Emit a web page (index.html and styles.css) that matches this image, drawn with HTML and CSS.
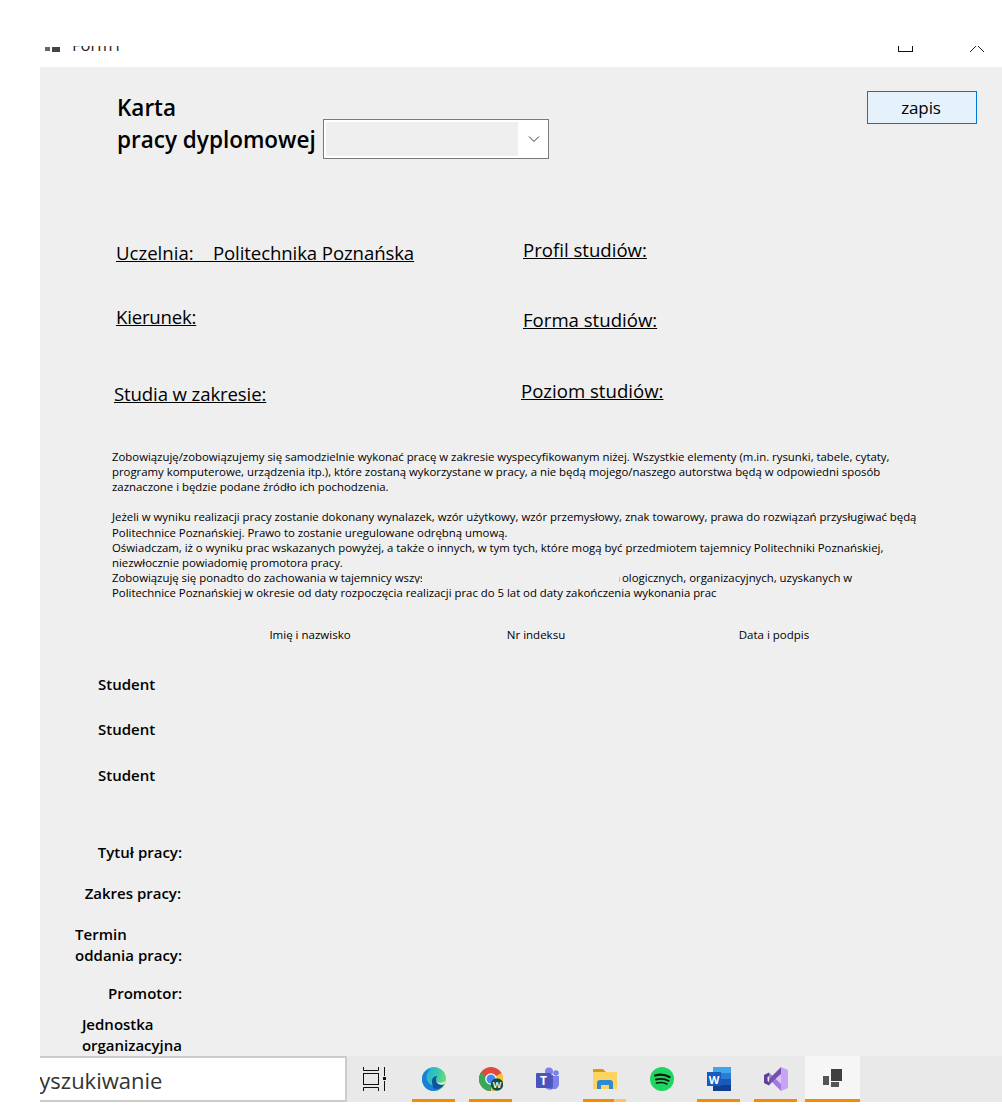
FILE: index.html
```html
<!DOCTYPE html>
<html lang="pl">
<head>
<meta charset="utf-8">
<title>Form1</title>
<link rel="stylesheet" href="styles.css">
</head>
<body>
<div class="screen">
  <header class="titlebar">
    <div class="title-clip">
      <div class="app-title">
        <svg class="title-icon" width="16" height="6" viewBox="0 0 16 6"><rect x="0" y="1" width="5" height="4" fill="#666"/><rect x="7" y="1" width="8" height="5" fill="#444"/></svg>
        <span>Form1</span>
      </div>
      <div class="win-buttons">
        <span class="win-max"></span>
        <svg class="win-close" width="20" height="20" viewBox="0 0 20 20"><path d="M0 0l20 20M20 0L0 20" stroke="#222" stroke-width="1" fill="none"/></svg>
      </div>
    </div>
  </header>

  <main class="form">
    <section class="head">
      <h1 class="doc-title">Karta<br>pracy dyplomowej</h1>
      <div class="combo">
        <div class="combo-value"></div>
        <svg class="combo-chevron" width="12" height="8" viewBox="0 0 12 8"><path d="M1 1.500l5 5 5-5" stroke="#333" stroke-width="1" fill="none"/></svg>
      </div>
      <button class="save">zapis</button>
    </section>

    <section class="fields">
      <div class="field f-a">Uczelnia: &nbsp;&nbsp; <span class="school">Politechnika Poznańska</span></div>
      <div class="field">Profil studiów:</div>
      <div class="field f-k">Kierunek:</div>
      <div class="field f-a">Forma studiów:</div>
      <div class="field f-c">Studia w zakresie:</div>
      <div class="field f-d">Poziom studiów:</div>
    </section>

    <section class="declaration">
      <p class="decl-text">Zobowiązuję/zobowiązujemy się samodzielnie wykonać pracę w zakresie wyspecyfikowanym niżej. Wszystkie elementy (m.in. rysunki, tabele, cytaty,<br>
programy komputerowe, urządzenia itp.), które zostaną wykorzystane w pracy, a nie będą mojego/naszego autorstwa będą w odpowiedni sposób<br>
zaznaczone i będzie podane źródło ich pochodzenia.<br>
<br>
Jeżeli w wyniku realizacji pracy zostanie dokonany wynalazek, wzór użytkowy, wzór przemysłowy, znak towarowy, prawa do rozwiązań przysługiwać będą<br>
Politechnice Poznańskiej. Prawo to zostanie uregulowane odrębną umową.<br>
Oświadczam, iż o wyniku prac wskazanych powyżej, a także o innych, w tym tych, które mogą być przedmiotem tajemnicy Politechniki Poznańskiej,<br>
niezwłocznie powiadomię promotora pracy.<br>
Zobowiązuję się ponadto do zachowania w tajemnicy wszystkich informacji technicznych, <span class="covered">techn</span>ologicznych, organizacyjnych, uzyskanych w<br>
Politechnice Poznańskiej w okresie od daty rozpoczęcia realizacji prac do 5 lat od daty zakończenia wykonania prac</p>
      <div class="decl-patch"></div>
    </section>

    <section class="col-heads">
      <span>Imię i nazwisko</span>
      <span>Nr indeksu</span>
      <span>Data i podpis</span>
    </section>

    <section class="students">
      <div>Student</div>
      <div>Student</div>
      <div>Student</div>
    </section>

    <section class="meta">
      <div class="m-title">Tytuł pracy:</div>
      <div class="m-scope">Zakres pracy:</div>
      <div class="m-term">Termin<br>oddania pracy:</div>
      <div class="m-prom">Promotor:</div>
      <div class="m-unit">Jednostka<br>organizacyjna</div>
    </section>
  </main>

  <footer class="taskbar">
    <div class="search"><span>Wyszukiwanie</span></div>
    <div class="tray">
      <div class="task-view">
        <svg width="26" height="24" viewBox="0 0 26 24"><g fill="none" stroke="#111" stroke-width="1"><path d="M1.500 0v3.500h15V0M1.500 24v-3.500h15V24"/><rect x="1.500" y="6.500" width="15" height="11"/><path d="M22.500 0v9M22.500 14v10"/></g><rect x="21" y="10" width="3" height="3" fill="#111"/></svg>
      </div>
      <div class="tb-item open">
        <svg width="24" height="24" viewBox="0 0 24 24"><defs><linearGradient id="e1" x1="0" y1="0.300" x2="1" y2="0.600"><stop offset="0" stop-color="#2aa9e6"/><stop offset="0.550" stop-color="#35c6b0"/><stop offset="1" stop-color="#72e06c"/></linearGradient></defs><circle cx="12" cy="12" r="12" fill="url(#e1)"/><path d="M22 17.500C19 22 15 24 11.500 24 5 24 0 18.500 0 12 0 6.500 4 2.500 9 2 5.500 4.500 3.500 8.500 5 13c2 6 11 8.500 17 4.500z" fill="#1b7fd6"/><path d="M10 15c-.5-3 1.500-6 5.500-6-1.500 1.500-2 3.500-1 5.500 1.500 2.500 5.500 3.500 7.500 3-2.500 4-7.500 5.500-10 4-1.500-1.500-1.500-4-2-6.500z" fill="#0c54a0"/><path d="M14 14.500c2 1.500 6 2 9.700-.5-.3 1.500-1 2.500-2.700 3.500-3 .5-6-.5-7-3z" fill="#e9e9e9"/></svg>
      </div>
      <div class="tb-item open">
        <svg width="24" height="24" viewBox="0 0 24 24"><circle cx="12" cy="12" r="12" fill="#dd4b3d"/><path d="M12 12L1.600 6A12 12 0 0 0 12 24z" fill="#3aa757"/><path d="M12 12l10.400-6A12 12 0 0 1 12 24z" fill="#f7c531"/><circle cx="12" cy="12" r="5.800" fill="#fff"/><circle cx="12" cy="12" r="4.500" fill="#4688f1"/><circle cx="18" cy="17.500" r="6.200" fill="#0d4f45"/><text x="18" y="20.800" text-anchor="middle" class="badge-w">W</text></svg>
      </div>
      <div class="tb-item">
        <svg width="24" height="24" viewBox="0 0 24 24"><circle cx="20" cy="6" r="2.800" fill="#7b83eb"/><circle cx="13" cy="4.500" r="4" fill="#7b83eb"/><path d="M8 9h15v8a5 5 0 0 1-6 5c-2 1.500-7 1-9-3z" fill="#7b83eb"/><path d="M14 8h3v11a3 3 0 0 1-3 3z" fill="#5059c9"/><rect x="0" y="6" width="15" height="15" rx="1" fill="#4b53bc"/><text x="7.500" y="18" text-anchor="middle" class="teams-t">T</text></svg>
      </div>
      <div class="tb-item open-partial">
        <svg width="24" height="24" viewBox="0 0 24 24"><path d="M0 2h10l3 3h11v3H0z" fill="#d99a12"/><rect x="0" y="5" width="24" height="17" fill="#fcd45e"/><path d="M4 22v-6a3 3 0 0 1 3-3h10a3 3 0 0 1 3 3v6h-4v-4H8v4z" fill="#2f8ad6"/></svg>
      </div>
      <div class="tb-item">
        <svg width="24" height="24" viewBox="0 0 24 24"><circle cx="12" cy="12" r="12" fill="#1ed760"/><g fill="none" stroke="#111" stroke-linecap="round"><path d="M5 8.500c5-1.500 10-1 14.500 1.500" stroke-width="2.200"/><path d="M6 12.500c4-1 9-.8 12.500 1.300" stroke-width="1.900"/><path d="M6.500 16c3.500-.8 7.500-.6 10.500 1" stroke-width="1.500"/></g></svg>
      </div>
      <div class="tb-item open">
        <svg width="24" height="24" viewBox="0 0 24 24"><rect x="6" y="0" width="18" height="6" fill="#41a5ee"/><rect x="6" y="6" width="18" height="6" fill="#2b7cd3"/><rect x="6" y="12" width="18" height="6" fill="#185abd"/><rect x="6" y="18" width="18" height="6" fill="#103f91"/><rect x="0" y="5" width="14" height="14" fill="#185abd"/><text x="7" y="16.500" text-anchor="middle" class="word-w">W</text></svg>
      </div>
      <div class="tb-item open">
        <svg width="24" height="24" viewBox="0 0 24 24"><path d="M17 0l7 3v18l-7 3z" fill="#c8a2f7"/><path d="M11 12l6-5v10z" fill="#d9c3f6"/><path d="M5 5.500L17 17v7L8.500 15.500 5 12z" fill="#a27adf"/><path d="M17 0v7L9 14l-4 4.500 0-5.500 3.500-4.500z" fill="#7252aa"/><path d="M0 8l5-2.500V9L3.500 10v4L5 15v3.500L0 16z" fill="#5d3f98"/></svg>
      </div>
      <div class="tb-item active">
        <svg width="20" height="20" viewBox="0 0 20 20"><rect x="0" y="7" width="6" height="9" fill="#555"/><rect x="8" y="0" width="11" height="12" fill="#3f3f3f"/><rect x="8" y="13" width="8" height="5" fill="#555"/></svg>
      </div>
    </div>
  </footer>
</div>
</body>
</html>
```
FILE: styles.css
```css
* { box-sizing: border-box; }
html, body { margin: 0; padding: 0; background: #fff; }
body { font-family: "Open Sans", "Noto Sans", sans-serif; color: #000; }
.screen { width: 1002px; height: 1116px; overflow: hidden; display: flex; flex-direction: column; background: #fff; }

.titlebar { height: 67px; padding-top: 46px; flex: none; }
.title-clip { height: 6px; overflow: hidden; display: flex; padding-left: 45px; }
.app-title { display: flex; gap: 11px; margin-top: -11px; font-size: 16.500px; line-height: 20px; color: #222; height: 20px; }
.title-icon { margin-top: 11px; }
.win-buttons { margin-left: auto; display: flex; }
.win-max { width: 15px; height: 16px; border: 1px solid #111; margin-top: -10px; margin-right: 53.500px; }
.win-close { margin-top: -11.500px; margin-right: 15.500px; }

.form { margin-left: 40px; height: 989px; flex: none; background: #efefef; overflow: hidden; }

.head { display: flex; align-items: flex-start; padding: 24px 25px 0 77px; height: 92px; }
.doc-title { margin: 1px 7px 0 0; font-size: 22.500px; line-height: 32px; font-weight: 600; }
.combo { width: 226px; height: 40px; margin-top: 28px; border: 1px solid #7a7a7a; background: #fff; display: flex; align-items: center; padding: 2px 8px 2px 2px; }
.combo-value { width: 194px; height: 100%; background: #efefef; }
.combo-chevron { margin-left: 10px; }
.save { margin-left: auto; width: 110px; height: 33px; border: 1px solid #0078d7; background: #e5f1fb; font: 400 17px/20px "Open Sans", sans-serif; letter-spacing: -0.1px; color: #000; padding: 0 2px 0 0; }

.fields { display: grid; grid-template-columns: 407px 1fr; grid-template-rows: 67px 74px auto; margin-top: 79px; padding-left: 76px; }
.field { font-size: 18.600px; line-height: 24px; text-decoration: underline; }
.school { letter-spacing: -0.1px; }
.f-a { margin-top: 3px; }
.f-k { letter-spacing: -0.2px; }
.f-c { margin: 3px 0 0 -2px; letter-spacing: -0.12px; }
.f-d { margin-left: -2px; }

.declaration { position: relative; margin-top: 42.500px; padding-left: 72px; }
.decl-text { margin: 0; font-size: 11.400px; line-height: 15.200px; white-space: nowrap; letter-spacing: -0.015px; }
.covered { letter-spacing: 1.600px; }
.decl-patch { position: absolute; left: 365px; top: 121px; width: 214.500px; height: 19px; background: #efefef; clip-path: polygon(17px 0, 100% 0, 100% 100%, 0 100%, 0 14px, 17px 14px); }

.col-heads { display: grid; grid-template-columns: 226px 226px 250px; justify-items: center; margin-top: 26.500px; padding-left: 157px; font-size: 11.500px; line-height: 16px; }

.students { margin-top: 30.500px; padding-left: 58px; display: grid; grid-auto-rows: 45.500px; font-size: 15px; line-height: 20px; font-weight: 600; }

.meta { width: 142px; margin-top: 31.500px; display: flex; flex-direction: column; align-items: flex-end; font-size: 15px; line-height: 21px; font-weight: 600; }
.m-scope { margin-top: 20px; margin-right: 1px; }
.m-term { margin-top: 20px; }
.m-prom { margin-top: 17px; }
.m-unit { margin-top: 10px; }

.taskbar { height: 46px; flex: none; display: flex; padding-left: 40px; background: #fff; }
.search { width: 307px; height: 46px; background: #fff; border-right: 2px solid #ccc; border-bottom: 2px solid #ccc; border-top: 2px solid #ccc; overflow: hidden; }
.search span { display: block; margin-left: -21px; font-size: 22px; line-height: 44px; color: #333; white-space: nowrap; }
.tray { flex: 1; display: flex; background: #e9e9e9; }
.task-view { width: 65px; padding: 11px 0 0 15px; }
.tb-item { width: 43px; margin-right: 14px; height: 46px; padding-top: 11px; display: flex; justify-content: center; border-bottom: 3px solid transparent; }
.tb-item.open { border-bottom-color: #f78b00; }
.tb-item.open-partial { border-image: linear-gradient(90deg, #f78b00 70%, #fbc27c 70%) 1; }
.tb-item.active { width: 55px; margin-left: -6px; margin-right: 0; background: #f6f6f6; border-bottom-color: #f78b00; padding-top: 13px; }
.badge-w { font: 700 9px "Open Sans", sans-serif; fill: #dfeee8; }
.teams-t { font: 700 12px "Open Sans", sans-serif; fill: #fff; }
.word-w { font: 700 11px "Open Sans", sans-serif; fill: #fff; }
```
